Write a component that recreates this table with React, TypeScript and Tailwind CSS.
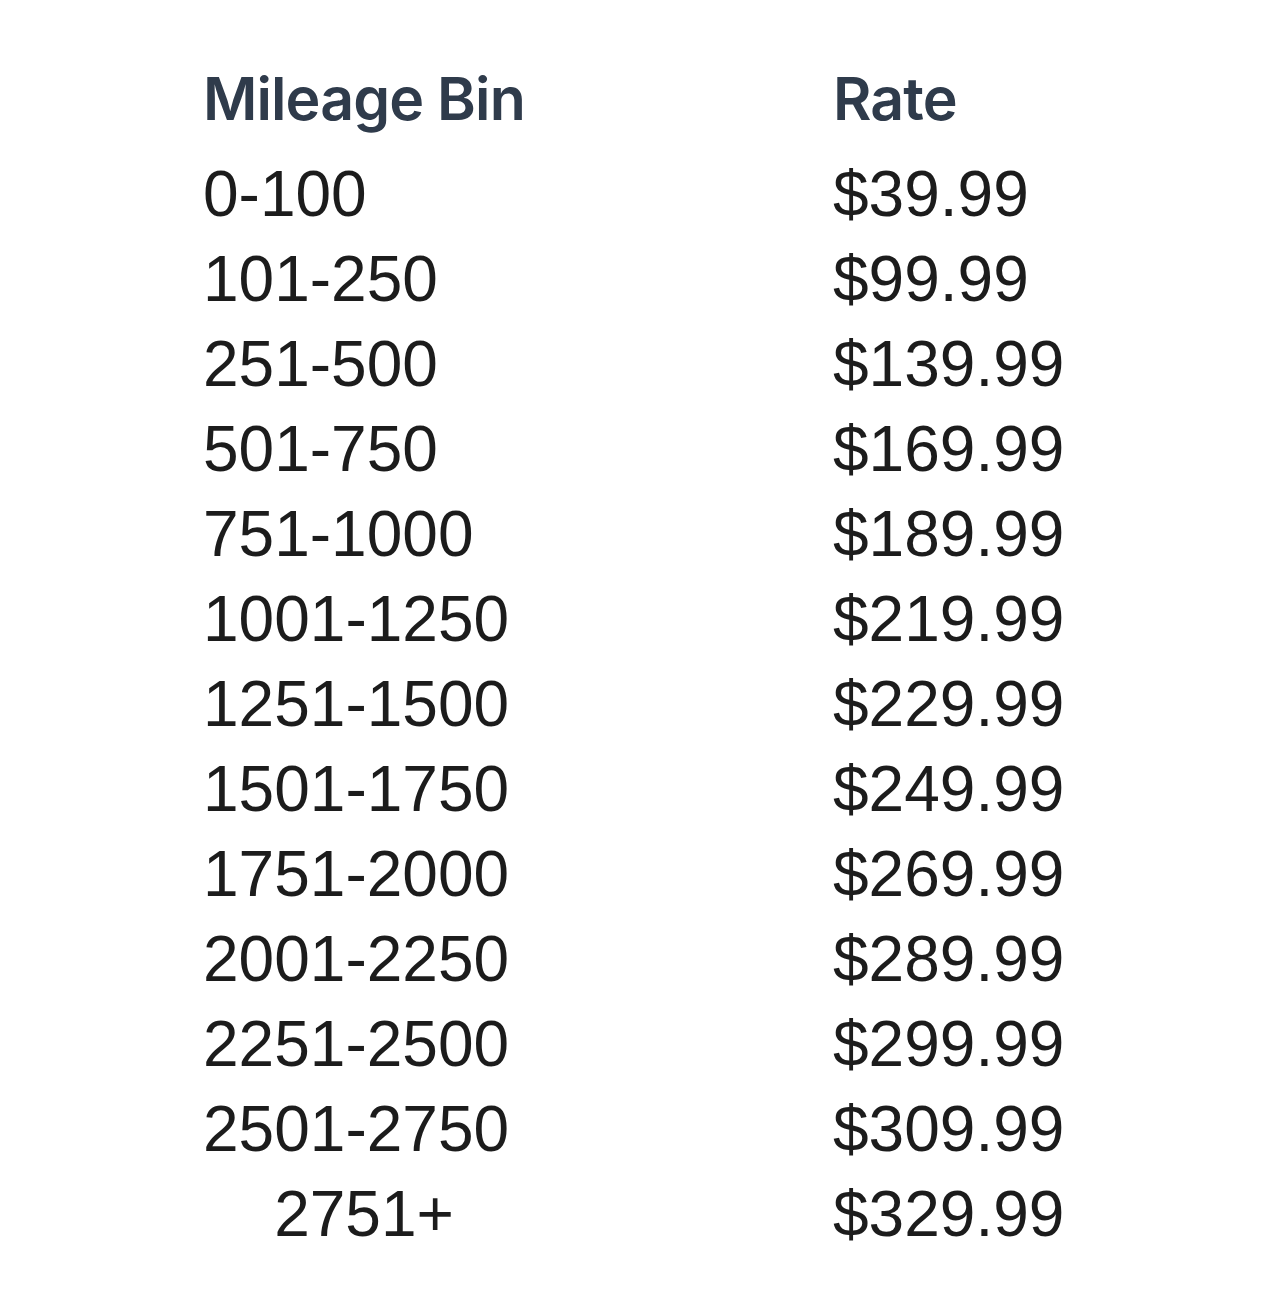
import { Fragment } from "react";

export default function App() {
  const rows: [string, string][] = [
    ["0-100", "$39.99"],
    ["101-250", "$99.99"],
    ["251-500", "$139.99"],
    ["501-750", "$169.99"],
    ["751-1000", "$189.99"],
    ["1001-1250", "$219.99"],
    ["1251-1500", "$229.99"],
    ["1501-1750", "$249.99"],
    ["1751-2000", "$269.99"],
    ["2001-2250", "$289.99"],
    ["2251-2500", "$299.99"],
    ["2501-2750", "$309.99"],
  ];
  return (
    <div className="w-[1280px] h-[1314px] bg-white pl-[203px] pt-[47px]">
      <div className="grid grid-cols-[630px_1fr]">
        <div className="h-[105px] flex items-center text-[59px] font-semibold text-[#2f3b4b] font-['Inter',sans-serif] tracking-[-0.9px]">
          Mileage Bin
        </div>
        <div className="h-[105px] flex items-center text-[59px] font-semibold text-[#2f3b4b] font-['Inter',sans-serif] tracking-[-0.9px]">
          Rate
        </div>
        {rows.map(([a, b]) => (
          <Fragment key={a}>
            <div className="h-[85px] leading-[85px] text-[64px] text-[#1c1c1c] font-['Liberation_Sans',Arial,sans-serif]">
              {a}
            </div>
            <div className="h-[85px] leading-[85px] text-[64px] text-[#1c1c1c] font-['Liberation_Sans',Arial,sans-serif]">
              {b}
            </div>
          </Fragment>
        ))}
        <div className="h-[85px] leading-[85px] text-[64px] text-[#1c1c1c] font-['Liberation_Sans',Arial,sans-serif] w-[322px] text-center">
          2751+
        </div>
        <div className="h-[85px] leading-[85px] text-[64px] text-[#1c1c1c] font-['Liberation_Sans',Arial,sans-serif]">
          $329.99
        </div>
      </div>
    </div>
  );
}
